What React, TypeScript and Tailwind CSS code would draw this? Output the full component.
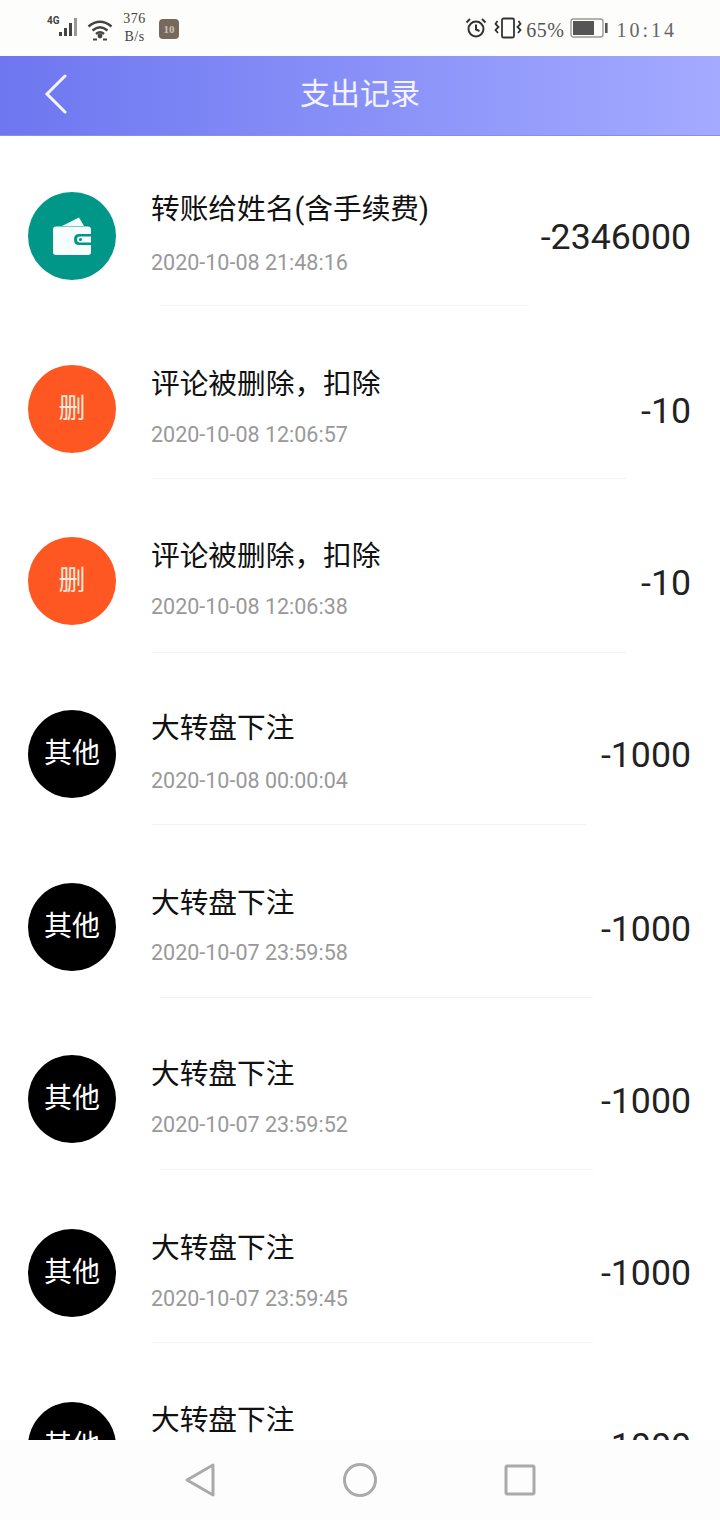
import React from "react";

const sans = "font-['Roboto','Noto_Sans_CJK_SC',sans-serif]";
const serif = "font-['Liberation_Serif','Noto_Sans_CJK_SC',serif]";

type Row = {
  h: string; title: string; date: string; amount: string; kind: "wallet" | "del" | "other";
  sep: string; mr: string; av: string; tm: string; dm: string; am: string;
};

const rows: Row[] = [
  { h: "h-[170px]", title: "转账给姓名(含手续费)", date: "2020-10-08 21:48:16", amount: "-2346000", kind: "wallet", sep: "ml-[9px]", mr: "mr-3", av: "pb-0", tm: "mt-[23px]", dm: "mt-[19px]", am: "pt-1" },
  { h: "h-[173px]", title: "评论被删除，扣除", date: "2020-10-08 12:06:57", amount: "-10", kind: "del", sep: "ml-px", mr: "mr-[14px]", av: "pb-0", tm: "mt-[25px]", dm: "mt-4", am: "pt-[6px]" },
  { h: "h-[174px]", title: "评论被删除，扣除", date: "2020-10-08 12:06:38", amount: "-10", kind: "del", sep: "ml-px", mr: "mr-[14px]", av: "pb-1", tm: "mt-[23px]", dm: "mt-4", am: "pt-[2px]" },
  { h: "h-[172px]", title: "大转盘下注", date: "2020-10-08 00:00:04", amount: "-1000", kind: "other", sep: "ml-px", mr: "mr-[14px]", av: "pb-[2px]", tm: "mt-[23px]", dm: "mt-[18px]", am: "pt-[2px]" },
  { h: "h-[173px]", title: "大转盘下注", date: "2020-10-07 23:59:58", amount: "-1000", kind: "other", sep: "ml-[9px]", mr: "mr-2", av: "pb-[2px]", tm: "mt-[25px]", dm: "mt-[15px]", am: "pt-1" },
  { h: "h-[172px]", title: "大转盘下注", date: "2020-10-07 23:59:52", amount: "-1000", kind: "other", sep: "ml-[9px]", mr: "mr-2", av: "pb-[2px]", tm: "mt-6", dm: "mt-4", am: "pt-1" },
  { h: "h-[173px]", title: "大转盘下注", date: "2020-10-07 23:59:45", amount: "-1000", kind: "other", sep: "ml-px", mr: "mr-2", av: "pb-0", tm: "mt-[25px]", dm: "mt-4", am: "pt-[2px]" },
  { h: "h-[173px]", title: "大转盘下注", date: "", amount: "-1000", kind: "other", sep: "ml-px", mr: "mr-2", av: "pb-0", tm: "mt-[24px]", dm: "mt-4", am: "pt-[2px]" },
];

function Wallet() {
  return (
    <svg width="40" height="40" viewBox="0 0 40 40" fill="none">
      <path d="M10 10 L27 1.5 L32 10 Z" fill="#f2fbfa" />
      <path fill="#f7fdfc" d="M4 10.5 Q1 10.5 1 13.5 V36 Q1 39 4 39 H36 Q39 39 39 36 V29 H27 Q22 29 22 23.5 Q22 18 27 18 H39 V13.5 Q39 10.5 36 10.5 Z" />
      <path fill="#f7fdfc" d="M28 20.5 H39 V26.5 H28 Q25 26.5 25 23.5 Q25 20.5 28 20.5 Z" />
      <circle cx="28.5" cy="23.5" r="1.6" fill="#009688" />
    </svg>
  );
}

function Avatar({ kind }: { kind: Row["kind"] }) {
  if (kind === "wallet")
    return <div className="w-[88px] h-[88px] shrink-0 rounded-full bg-[#009688] flex items-center justify-center"><Wallet /></div>;
  if (kind === "del")
    return <div className="w-[88px] h-[88px] shrink-0 rounded-full bg-[#ff5722] flex items-center justify-center text-[#fde8dd] text-[27px] leading-none">删</div>;
  return <div className="w-[88px] h-[88px] shrink-0 rounded-full bg-black flex items-center justify-center text-white text-[28px] leading-none">其他</div>;
}

function StatusBar() {
  return (
    <div className={`h-14 shrink-0 bg-[#fdfdfb] flex items-center text-[#555] ${serif}`}>
      <div className="relative w-[33px] h-[24px] ml-[47px] mt-1">
        <span className={`absolute left-0 top-[-3px] text-[10px] leading-[12px] font-bold text-[#444] ${sans}`}>4G</span>
        <svg className="absolute left-[11px] top-[-1px]" width="22" height="20" viewBox="0 0 22 20">
          <rect x="1" y="15" width="3" height="4" fill="#444" />
          <rect x="6" y="11" width="3" height="8" fill="#444" />
          <rect x="11" y="6" width="3" height="13" fill="#444" />
          <rect x="16" y="1" width="3" height="18" fill="#999" />
        </svg>
      </div>
      <svg className="ml-[7px] mt-1" width="26" height="22" viewBox="0 0 26 22" fill="none" stroke="#444" strokeWidth="2.4">
        <path d="M1.5 7.5 Q13 -2 24.5 7.5" />
        <path d="M5.5 11.5 Q13 5 20.5 11.5" />
        <path d="M9 15 Q13 11.5 17 15" />
        <circle cx="13" cy="17" r="1.2" fill="#444" />
        <path d="M6 20.5 H10 M16 20.5 H20" strokeWidth="1.8" />
      </svg>
      <div className="ml-[8px] w-[27px] flex flex-col items-center text-[14px] leading-[18px] tracking-[0.5px] text-[#444]">
        <span>376</span>
        <span>B/s</span>
      </div>
      <div className="ml-[11px] mt-[2px] w-5 h-5 rounded-[4px] bg-[#75695c] flex items-center justify-center text-[11px] font-bold leading-none text-[#c9c2b4]">10</div>
      <svg className="ml-auto" width="22" height="22" viewBox="0 0 22 22" fill="none" stroke="#333" strokeWidth="2">
        <circle cx="11" cy="12" r="7.5" />
        <path d="M11 7.5 V12.5 L14.5 14" />
        <path d="M1.5 5.5 L5 2 M20.5 5.5 L17 2" />
      </svg>
      <svg className="ml-[7px]" width="28" height="22" viewBox="0 0 28 22" fill="none" stroke="#333" strokeWidth="1.8">
        <rect x="8" y="1.5" width="12" height="19" rx="1.5" />
        <path d="M3.5 4 L1.5 7 L4.5 10 L1.5 13 L4 16 M24.5 4 L26.5 7 L23.5 10 L26.5 13 L24 16" />
      </svg>
      <span className="ml-[4px] text-[20px] leading-none tracking-[0.5px] text-[#555] mt-1">65%</span>
      <svg className="ml-[6px]" width="38" height="22" viewBox="0 0 38 22" fill="none">
        <rect x="1" y="2" width="32" height="18" rx="2.5" stroke="#999" strokeWidth="1.4" />
        <rect x="3" y="4" width="21" height="14" fill="#555" />
        <rect x="35" y="6" width="2.6" height="10" fill="#555" />
      </svg>
      <span className="ml-[8px] mr-[43px] text-[20px] leading-none tracking-[3px] text-[#666] mt-1">10:14</span>
    </div>
  );
}

function Header() {
  return (
    <div className="h-20 shrink-0 relative flex items-center justify-center pb-1 bg-gradient-to-r from-[#6e76f0] to-[#a4aaff] border-b border-[#8a90e0]">
      <svg className="absolute left-[44px] top-[18px]" width="24" height="40" viewBox="0 0 24 40" fill="none" stroke="#f4f5ff" strokeWidth="3" strokeLinecap="round">
        <path d="M21 2 L3 20 L21 38" />
      </svg>
      <span className={`text-[30px] leading-none text-[#f3f4ff] ${sans}`}>支出记录</span>
    </div>
  );
}

function ListRow({ row }: { row: Row }) {
  return (
    <div className={`${row.h} shrink-0 flex flex-col justify-end`}>
      <div className="h-[140px] flex pl-7 pr-[29px]">
        <div className={`h-full flex items-center ${row.av}`}><Avatar kind={row.kind} /></div>
        <div className={`ml-[35px] flex-1 flex flex-col ${row.mr}`}>
          <div className={`text-[28.7px] leading-10 text-[#111] whitespace-nowrap ${row.tm}`}>{row.title}</div>
          <div className={`text-[21.5px] leading-[30px] h-[30px] text-[#999] whitespace-nowrap ${row.dm}`}>{row.date}</div>
          <div className={`mt-auto h-px bg-[#f2f2f2] ${row.sep}`} />
        </div>
        <div className={`h-full flex items-center text-[35.7px] leading-none text-[#222] ${row.am}`}>{row.amount}</div>
      </div>
    </div>
  );
}

function NavBar() {
  return (
    <div className="h-20 shrink-0 bg-[#fdfdfd] flex items-center justify-center">
      <svg className="w-full" height="80" viewBox="0 0 720 80" fill="none" stroke="#aaaaaa" strokeWidth="3">
        <path d="M213 25 L187 40 L213 55 Z" strokeLinejoin="round" />
        <circle cx="360" cy="40" r="15.5" />
        <rect x="506" y="26" width="28" height="28" rx="1.5" />
      </svg>
    </div>
  );
}

export default function App() {
  return (
    <div className={`w-[720px] h-[1520px] flex flex-col overflow-hidden bg-white ${sans}`}>
      <StatusBar />
      <Header />
      <div className="flex-1 min-h-0 overflow-hidden flex flex-col">
        {rows.map((r, i) => <ListRow key={i} row={r} />)}
      </div>
      <NavBar />
    </div>
  );
}
